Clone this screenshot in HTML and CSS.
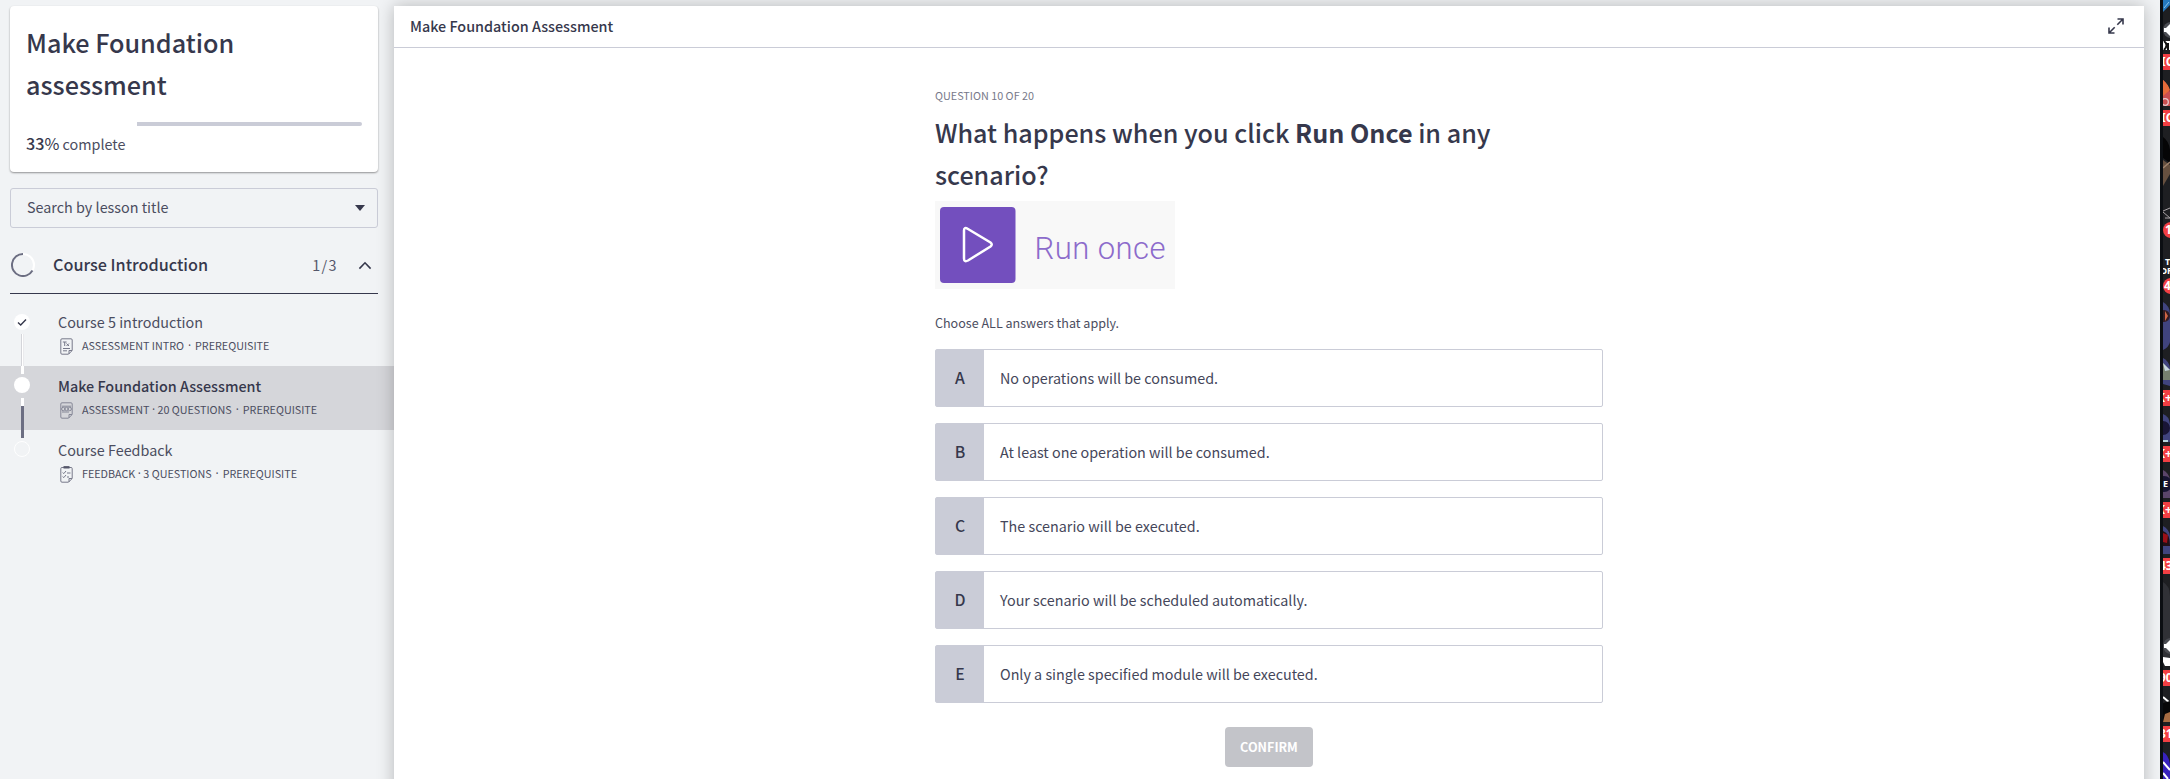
FILE: index.html
```html
<!DOCTYPE html>
<html lang="en">
<head>
<meta charset="utf-8">
<title>Make Foundation Assessment</title>
<link rel="stylesheet" href="styles.css">
</head>
<body>
<div class="app">
  <aside class="sidebar">
    <section class="course-card">
      <h1 class="course-title">Make Foundation assessment</h1>
      <div class="progress"><div class="progress-rest"></div></div>
      <p class="progress-label"><b>33<span class="pct">%</span></b> complete</p>
    </section>
    <div class="search"><span>Search by lesson title</span><svg width="10" height="6" viewBox="0 0 10 6"><path d="M0 0H10L5 6Z" fill="#36384c"/></svg></div>
    <header class="section-head">
      <svg class="ring" width="24" height="24" viewBox="0 0 24 24" fill="none" stroke-width="2"><circle cx="12" cy="12" r="11" stroke="#fff"/><path d="M12 1A11 11 0 1 0 21.5 17.5" stroke="#6c6e82"/></svg>
      <h2 class="section-title">Course Introduction</h2>
      <span class="count">1/3</span>
      <svg width="14" height="9" viewBox="0 0 14 9" fill="none" stroke="#36384c" stroke-width="1.6"><path d="M1.4 7.6L7 1.8L12.6 7.6"/></svg>
    </header>
    <ul class="lessons">
      <li class="lesson">
        <svg class="track" width="20" height="64" viewBox="0 0 20 64"><circle cx="10" cy="20" r="8" fill="#fff"/><path d="M6 20.5L8.7 23L14 17.5" fill="none" stroke="#36384c" stroke-width="1.4"/><path d="M9 32H12V64H9Z" fill="#d4d5da"/><path d="M10 32H11.5V64H10Z" fill="#fff"/></svg>
        <div class="lesson-text">
          <div class="lesson-title">Course 5 introduction</div>
          <div class="meta"><svg width="13" height="17" viewBox="0 0 13 17" fill="none" stroke="#77798a"><path d="M12.2 12V2Q12.2.8 11 .8H2Q.8.8.8 2V15Q.8 16.2 2 16.2H8.5L12.2 12.5H9V16"/><path d="M2.8 4H6.6M4.7 4V8M6.5 5.5L9 8M9 5.5L6.5 8M3 10.5H10M3 12.8H7"/></svg><span>ASSESSMENT INTRO<i class="dot">·</i>PREREQUISITE</span></div>
        </div>
      </li>
      <li class="lesson current">
        <svg class="track" width="20" height="64" viewBox="0 0 20 64"><path d="M9 0H12V8H9Z" fill="#fff"/><circle cx="10" cy="19" r="8" fill="#fff"/><path d="M9 32H12V40H9Z" fill="#fff"/><path d="M9 40H12V64H9Z" fill="#6c6e82"/></svg>
        <div class="lesson-text">
          <div class="lesson-title">Make Foundation Assessment</div>
          <div class="meta"><svg width="13" height="17" viewBox="0 0 13 17" fill="none" stroke="#858796"><path d="M12.2 12V2Q12.2.8 11 .8H2Q.8.8.8 2V15Q.8 16.2 2 16.2H8.5L12.2 12.5H9V16"/><circle cx="3.3" cy="7" r="1.7"/><circle cx="6.5" cy="7" r="1.7"/><circle cx="9.7" cy="7" r="1.7"/><path d="M2 4.2H11M2 10H9"/></svg><span>ASSESSMENT<i class="dot tight">·</i>20 QUESTIONS<i class="dot">·</i>PREREQUISITE</span></div>
        </div>
      </li>
      <li class="lesson">
        <svg class="track" width="20" height="64" viewBox="0 0 20 64"><path d="M9 0H12V8H9Z" fill="#6c6e82"/><circle cx="10" cy="19" r="7.5" fill="none" stroke="#fff"/></svg>
        <div class="lesson-text">
          <div class="lesson-title">Course Feedback</div>
          <div class="meta"><svg width="13" height="17" viewBox="0 0 13 17" fill="none" stroke="#77798a"><path d="M12.2 12V2.5Q12.2 1.5 11 1.5H2Q.8 1.5.8 2.5V15Q.8 16.2 2 16.2H8.5L12.2 12.5H9V16"/><path d="M3.5 1.3H9.5" stroke="#55576a" stroke-width="2.4"/><path d="M2.6 6.5L3.8 7.6L6 5M7 7H10.5M2.6 10.5L3.8 11.6L6 9M7 11H9"/></svg><span>FEEDBACK<i class="dot tight">·</i>3 QUESTIONS<i class="dot">·</i>PREREQUISITE</span></div>
        </div>
      </li>
    </ul>
  </aside>

  <main class="panel">
    <header class="panel-head">
      <span class="panel-title">Make Foundation Assessment</span>
      <svg width="16" height="16" viewBox="0 0 16 16" fill="none" stroke="#36384c" stroke-width="1.6"><path d="M9.3 6.7L15 1M9.5 1H15V6.5M6.7 9.3L1 15M1 9.5V15H6.5"/></svg>
    </header>
    <div class="question">
      <div class="eyebrow">QUESTION 10 OF 20</div>
      <h2 class="prompt">What happens when you click <b>Run Once</b> in any scenario?</h2>
      <svg class="figure" width="240" height="88" viewBox="0 0 240 88">
        <rect width="240" height="88" fill="#f8f8f8"/>
        <rect x="5" y="6" width="75.5" height="76" rx="4" fill="#734fbe"/>
        <path d="M29 29.5Q29 25.5 33 28L55.5 41.5Q58 43.5 55.5 45.5L33 59.5Q29 61.5 29 57.5Z" fill="none" stroke="#fff" stroke-width="2.5"/>
        <text class="run" x="99.5" y="58" textLength="131">Run once</text>
      </svg>
      <p class="hint">Choose ALL answers that apply.</p>
      <div class="options">
        <div class="option"><span class="key">A</span><span class="answer">No operations will be consumed.</span></div>
        <div class="option"><span class="key">B</span><span class="answer">At least one operation will be consumed.</span></div>
        <div class="option"><span class="key">C</span><span class="answer">The scenario will be executed.</span></div>
        <div class="option"><span class="key">D</span><span class="answer">Your scenario will be scheduled automatically.</span></div>
        <div class="option"><span class="key">E</span><span class="answer">Only a single specified module will be executed.</span></div>
      </div>
      <button class="confirm">CONFIRM</button>
    </div>
  </main>

  <svg class="strip" width="10" height="779" viewBox="0 0 10 779">
    <rect width="10" height="779" fill="#1e1f22"/>
    <path d="M3 0H10V5L3 12Z" fill="#2478bd"/><path d="M4 8L9 2" stroke="#8cc4ea"/>
    <circle cx="11" cy="30" r="8" fill="#4a4c52"/><path d="M4 28H6L10 24V36L6 32H4Z" fill="#fff"/>
    <rect x="3" y="41" width="7" height="9" fill="#fff"/><path d="M4 41Q9 45 4 50M8 50V43" stroke="#111" stroke-width="2" fill="none"/>
    <path d="M3 80Q8 84 10 92V106H3Z" fill="#c94f50"/><path d="M3 80Q8 84 10 90L3 96Z" fill="#e66b3a"/><circle cx="5" cy="102" r="3.3" fill="none" stroke="#e8c8cc" stroke-width="1.3"/>
    <path d="M3 137Q9 141 10 150V163L3 158Z" fill="#050506"/><path d="M3 160L10 165V174L3 186Z" fill="#66503f"/><path d="M3 168L10 162" stroke="#a0836c" stroke-width="1.5"/>
    <path d="M3 211L10 208M3 212L10 218M5 218H10" stroke="#a9a3a6" fill="none"/>
    <path d="M3 302Q10 306 10 314V342Q9 347 3 350Z" fill="#40447e"/><circle cx="4" cy="316" r="6" fill="#321c22"/><path d="M5 311L8 316L5 321Z" fill="#d06545"/>
    <path d="M3 358Q9 361 10 368V386L3 384Z" fill="#40447e"/><path d="M3 363L10 370V380H3Z" fill="#76806e"/><path d="M3 363L10 370L5 371Z" fill="#c7d7df"/>
    <path d="M3 414Q9 416 10 424V442H3Z" fill="#40447e"/><circle cx="3" cy="428" r="7" fill="#191536"/><path d="M3 441H8" stroke="#b9d6df" stroke-width="2"/>
    <path d="M3 470Q9 473 10 480V498H3Z" fill="#5a4569"/><circle cx="4" cy="484" r="8" fill="#161431"/>
    <path d="M3 526Q9 529 10 536V554H3Z" fill="#40447e"/><path d="M3 531Q10 533 10 546H3Z" fill="#241014"/><path d="M3 533L8 535L7 543L3 542Z" fill="#9a1018"/>
    <path d="M3 582Q10 586 10 596V658H3Z" fill="#303136"/><circle cx="11" cy="646" r="8" fill="#4a4c52"/><path d="M4 644H6L10 640V652L6 648H4Z" fill="#fff"/><path d="M3 657L10 658V666H5L3 662Z" fill="#fff"/>
    <path d="M3 697L10 703" stroke="#fff" stroke-width="2"/><path d="M3 703L10 701V722H3Z" fill="#070708"/><path d="M5 714L10 712V722H3Z" fill="#a86c42"/>
    <path d="M3 752Q9 755 10 765V779H3Z" fill="#3722bd"/><path d="M3 762L10 770M3 773L8 779" stroke="#fff" stroke-width="2"/>
    <g fill="#f23f43"><path d="M3 54H10V70H3ZM3 110H10V126H3ZM3 390H10V406H3ZM3 446H10V462H3ZM3 502H10V518H3ZM3 558H10V574H3ZM3 670H10V686H3ZM3 726H10V742H3Z"/><circle cx="11" cy="230" r="8"/><circle cx="11" cy="286" r="8"/></g>
    <g class="tag"><text x="1" y="66">IC</text><text x="1" y="122">IC</text><text x="5" y="234">1</text><text class="small" x="5" y="265">T</text><text class="small" x="0" y="274">OR</text><text x="4" y="290">4</text><text x="-3" y="402">K+</text><text x="-3" y="458">K+</text><text class="small" x="3" y="487">E</text><text x="-3" y="514">K+</text><text x="-1" y="570">43</text><text x="-1" y="682">90</text><text x="-1" y="738">31</text></g>
    <rect width="3" height="779" fill="#0b0e12"/>
  </svg>
</div>
</body>
</html>
```
FILE: styles.css
```css
* { box-sizing: border-box; }
body, h1, h2, p, ul { margin: 0; padding: 0; }
body {
  width: 2170px; height: 779px; overflow: hidden;
  background: #f1f3f5; color: #36384c;
  font: 14.37px/24px "Noto Sans CJK SC", "Noto Sans CJK JP", sans-serif;
}
svg { display: block; flex: none; }
.app { display: flex; height: 779px; }
.sidebar { width: 394px; padding-top: 6px; flex: none; }
.course-card {
  width: 368px; height: 166px; margin-left: 10px; padding: 15px 16px 0;
  background: #fff; border-radius: 4px;
  box-shadow: 0 1px 2px rgba(0, 0, 0, .4);
}
.course-title { font-size: 25.2px; line-height: 42px; font-weight: 500; width: 300px; }
.progress { display: flex; justify-content: flex-end; margin-top: 17px; height: 4px; }
.progress-rest { width: 67%; background: #caccd7; border-radius: 0 2px 2px 0; }
.progress-label { margin-top: 5px; color: #4b4d60; }
.progress-label b { font-size: 16.2px; font-weight: 500; color: #36384c; }
.progress-label .pct { font-weight: 400; }
.search {
  display: flex; align-items: center; justify-content: space-between;
  width: 368px; height: 40px; margin: 16px 0 0 10px; padding: 0 12px 1px 16px;
  border: 1px solid #caccd7; border-radius: 3px; color: #4b4d60;
}
.search span { margin-top: -2px; }
.section-head {
  display: flex; align-items: center;
  width: 368px; height: 66px; margin-left: 10px; padding: 9px 6px 0 1px;
  border-bottom: 1px solid #36384c;
}
.section-title { flex: 1; margin: -2px 0 0 18px; font-size: 16.2px; font-weight: 500; }
.count { margin-right: 20px; letter-spacing: 1.4px; color: #55576a; }
.lessons { list-style: none; padding-top: 8px; }
.lesson { display: flex; height: 64px; color: #4b4d60; }
.track { margin-left: 12px; }
.lesson-text { padding: 8px 0 0 26px; white-space: nowrap; }
.current { background: #d5d6da; }
.current .lesson-title { font-weight: 500; color: #36384c; }
.meta { display: flex; align-items: center; gap: 9px; margin-left: 2px; height: 24px; font-size: 10.75px; }
.dot {
  display: inline-block; width: 11px; text-align: center;
  font: normal 12px/12px "Open Sans", sans-serif;
}
.tight { width: 8px; }
.panel { width: 1750px; flex: none; height: 790px; margin-top: 6px; background: #fff; box-shadow: 0 0 16px rgba(0, 0, 0, .25); }
.panel-head {
  display: flex; align-items: center; justify-content: space-between;
  height: 42px; padding: 0 20px 1px 16px; border-bottom: 1px solid #caccd7;
}
.panel-title { font-weight: 500; }
.question { width: 668px; margin-left: 541px; padding-top: 35px; }
.eyebrow { font-size: 10.8px; color: #77798a; }
.prompt { margin-top: 4px; font-size: 25.14px; line-height: 42px; font-weight: 500; }
.prompt b { font-weight: 700; }
.figure { margin-top: 6px; }
.run { font: 300 31px Roboto, sans-serif; fill: #8c6bcb; }
.hint { margin-top: 22px; font-size: 12.55px; color: #4b4d60; }
.options { display: flex; flex-direction: column; gap: 16px; margin-top: 14px; }
.option { display: flex; align-items: stretch; height: 58px; border: 1px solid #caccd7; border-radius: 2px; line-height: 56px; }
.key { width: 48px; background: #caccd7; text-align: center; font-size: 15.8px; font-weight: 500; }
.answer { margin-left: 16px; color: #44465a; font-size: 14.34px; }
.confirm {
  display: block; width: 88px; height: 40px; margin: 24px auto 0; padding: 0;
  border: 0; border-radius: 4px; background: #c3c4c9; color: #fff;
  font: 700 12.6px/40px "Noto Sans CJK SC", sans-serif;
}
.strip { margin-left: 16px; }
.tag { font: 700 12px "Noto Sans", sans-serif; fill: #fff; }
.small { font-size: 9px; }
```
